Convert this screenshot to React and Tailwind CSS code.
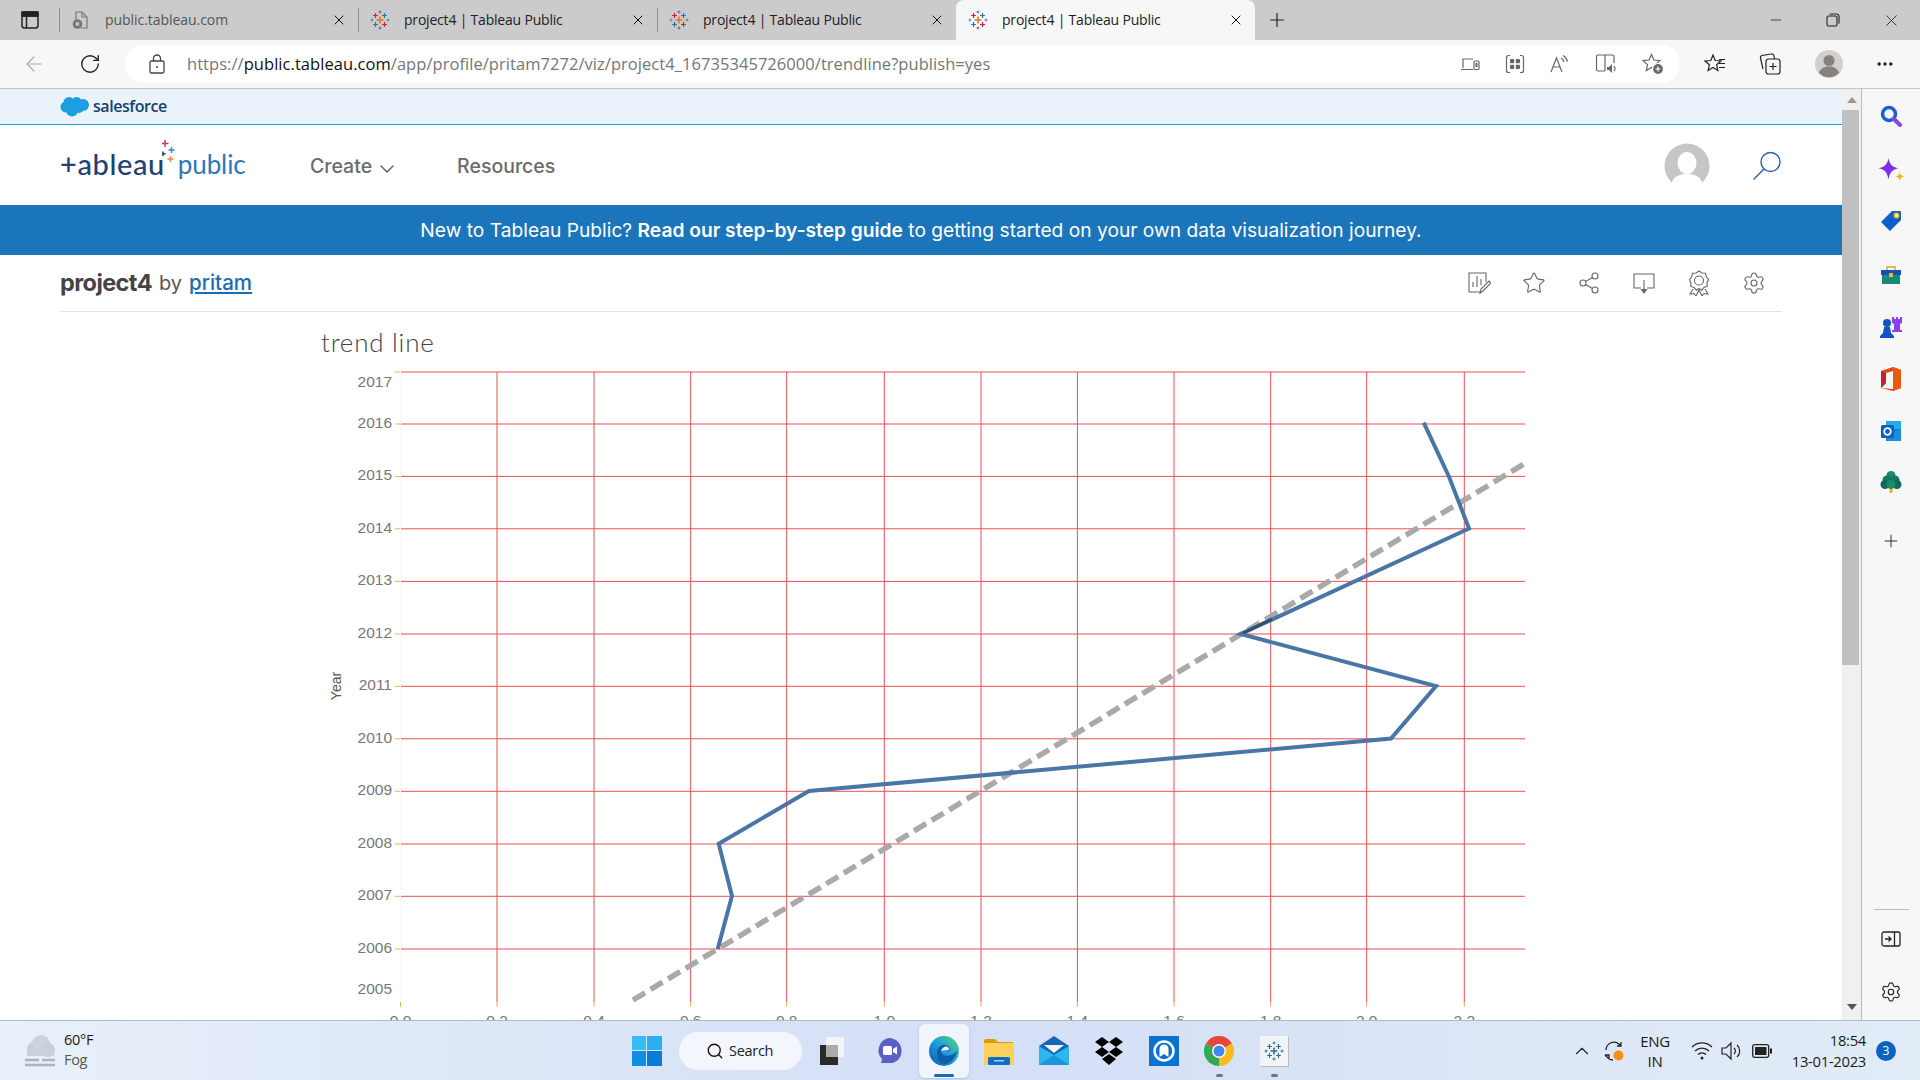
import { ArrowLeft, RotateCw, Plus, X, Minus, ChevronDown, ChevronUp, Star, Share2, Settings, Search, MoreHorizontal } from "lucide-react";

const ySteps = [
  ["2016", 424], ["2015", 476.4], ["2014", 528.8], ["2013", 581.4], ["2012", 634],
  ["2011", 686.3], ["2010", 738.8], ["2009", 791.3], ["2008", 844], ["2007", 896.3], ["2006", 949],
];
const xSteps = [
  ["0.0", 400.5], ["0.2", 497], ["0.4", 594], ["0.6", 690.7], ["0.8", 786.7], ["1.0", 884.3],
  ["1.2", 981], ["1.4", 1077.4], ["1.6", 1174], ["1.8", 1270.7], ["2.0", 1366.7], ["2.2", 1464.3],
];
const series = "1423.7,422.7 1449,476.7 1469,528.5 1240.7,634 1436,686 1391,738.6 809,790.9 718.7,843.8 732,896 717.7,949";

function TableauMark({ tile }) {
  const c = tile
    ? ["#2f6d9e", "#2f6d9e", "#2f6d9e", "#2f6d9e", "#2f6d9e"]
    : ["#e8762c", "#c72037", "#1f77b4", "#5b6591", "#59879b"];
  const cross = (x, y, s, col, w) => (
    <path d={`M${x - s} ${y}H${x + s}M${x} ${y - s}V${y + s}`} stroke={col} strokeWidth={w} />
  );
  return (
    <svg width="20" height="20" viewBox="0 0 20 20" fill="none">
      {cross(10, 10, 3.5, c[0], 1.6)}
      {cross(5.5, 5.5, 2.4, c[1], 1.2)}
      {cross(14.5, 5.5, 2.4, c[2], 1.2)}
      {cross(5.5, 14.5, 2.4, c[2], 1.2)}
      {cross(14.5, 14.5, 2.4, c[1], 1.2)}
      {cross(10, 2, 1.5, c[3], 1)}
      {cross(10, 18, 1.5, c[3], 1)}
      {cross(2, 10, 1.5, c[4], 1)}
      {cross(18, 10, 1.5, c[4], 1)}
    </svg>
  );
}

function Tab({ icon, label, active, sep, muted }) {
  return (
    <div className={`relative flex h-10 w-[299px] items-center ${active ? "rounded-t-lg bg-[#f7f7f7]" : ""}`}>
      {sep && <div className="absolute left-0 top-[8px] h-6 w-px bg-[#8d8d8d]" />}
      <div className="ml-[12px] flex w-[20px] justify-center">{icon}</div>
      <span className={`mb-[2px] ml-[14px] w-[226px] text-[14px] ${muted ? "tracking-[-0.05px] text-[#555]" : "tracking-[-0.2px] text-[#222]"}`}>{label}</span>
      <X size={16} strokeWidth={1.5} className="text-[#111]" />
    </div>
  );
}

function TabBar() {
  return (
    <div className="flex h-10 items-center bg-[#cbcbcb]">
      <div className="flex w-[59px] justify-center">
        <svg width="18" height="18" viewBox="0 0 18 18" fill="none" stroke="#222" strokeWidth="1.5">
          <rect x="1" y="1" width="16" height="16" rx="2.5" />
          <path d="M1 5h16M5.5 5v12" />
          <path d="M1 1h16v4H1z" fill="#222" />
        </svg>
      </div>
      <Tab
        sep
        muted
        label="public.tableau.com"
        icon={
          <svg width="18" height="20" viewBox="0 0 18 20" fill="none" stroke="#777" strokeWidth="1.2">
            <path d="M4 13V2h6l5 5v11H9" />
            <path d="M10 2v5h5" />
            <circle cx="5.5" cy="14" r="4.8" fill="#777" stroke="none" />
            <path d="M3.8 12.3l3.4 3.4M7.2 12.3l-3.4 3.4" stroke="#ddd" />
          </svg>
        }
      />
      <Tab sep label="project4 | Tableau Public" icon={<TableauMark />} />
      <Tab sep label="project4 | Tableau Public" icon={<TableauMark />} />
      <Tab active label="project4 | Tableau Public" icon={<TableauMark />} />
      <Plus size={22} strokeWidth={1.3} className="ml-[11px] text-[#222]" />
      <div className="ml-auto flex items-center text-[#222]">
        <Minus size={16} strokeWidth={1.2} className="mr-[42px]" />
        <svg width="14" height="14" viewBox="0 0 14 14" fill="none" stroke="#222" strokeWidth="1.1" className="mr-[42px]">
          <rect x="1" y="3" width="10" height="10" rx="1.5" />
          <path d="M3.5 1h7a2.5 2.5 0 0 1 2.5 2.5v7" />
        </svg>
        <X size={19} strokeWidth={1.1} className="mr-[19px]" />
      </div>
    </div>
  );
}

function AddressIcons() {
  const s = { fill: "none", stroke: "#666", strokeWidth: 1.2 };
  return (
    <div className="ml-auto flex items-center gap-[25px] pr-[16px]">
      <svg width="20" height="20" viewBox="0 0 20 20" {...s}>
        <path d="M3 14V5h10M1 15.5h12" />
        <rect x="14" y="7" width="5" height="8.5" rx="1" />
        <rect x="15.5" y="9" width="2" height="4" fill="#666" stroke="none" />
      </svg>
      <svg width="20" height="20" viewBox="0 0 20 20" {...s}>
        <path d="M5 1.5H3.5a2 2 0 0 0-2 2V16.500a2 2 0 0 0 2 2H5M15 1.500h1.500a2 2 0 0 1 2 2V16.500a2 2 0 0 1-2 2H15" />
        <rect x="5" y="5" width="4.2" height="4.2" rx="1" fill="#666" stroke="none" />
        <rect x="10.8" y="5" width="4.2" height="4.2" rx="1" fill="#666" stroke="none" />
        <rect x="5" y="10.8" width="4.2" height="4.2" rx="1" fill="#666" stroke="none" />
        <rect x="10.8" y="10.8" width="4.2" height="4.2" rx="1" fill="#666" stroke="none" />
      </svg>
      <svg width="20" height="20" viewBox="0 0 20 20" {...s}>
        <path d="M1 18L6.5 4 12 18M3 13h7" />
        <path d="M11 4a6 6 0 0 1 3 4M13 1.5a9 9 0 0 1 4.5 6" />
      </svg>
      <svg width="22" height="20" viewBox="0 0 22 20" {...s}>
        <path d="M10 17H3a1.500 1.500 0 0 1-1.500-1.500V2.500A1.500 1.500 0 0 1 3 1h7v16M10 1h7.500A1.500 1.500 0 0 1 19 2.500V9" />
        <path d="M12 13h2l3-3v9l-3-3h-2z" fill="#666" stroke="none" />
        <path d="M19 12a4 4 0 0 1 0 5" />
      </svg>
      <svg width="22" height="22" viewBox="0 0 22 22" {...s}>
        <path d="M9.500 1.500l2.400 5.500 6 .6-4.500 4 1.300 5.900-5.200-3-5.200 3 1.300-5.900-4.500-4 6-.6z" />
        <circle cx="16" cy="16" r="5.500" fill="#666" stroke="#fff" />
        <path d="M16 13.500v5M13.500 16h5" stroke="#fff" />
      </svg>
    </div>
  );
}

function ToolBar() {
  return (
    <div className="flex h-[49px] items-center border-b border-[#c4c4c4] bg-[#f7f7f7]">
      <ArrowLeft size={24} strokeWidth={1.1} className="ml-[22px] text-[#aaa]" />
      <RotateCw size={22} strokeWidth={1.5} className="ml-[33px] text-[#222]" />
      <div className="ml-[24px] flex h-[38px] w-[1555px] items-center rounded-full bg-white">
        <svg width="16" height="20" viewBox="0 0 16 20" fill="none" stroke="#444" strokeWidth="1.3" className="ml-[24px]">
          <rect x="1" y="7" width="14" height="12" rx="1.500" />
          <path d="M4.500 7V4.500a3.500 3.500 0 0 1 7 0V7" />
          <circle cx="8" cy="13" r="1" fill="#444" stroke="none" />
        </svg>
        <div className="ml-[22px] text-[16.500px] tracking-[0.05px] text-[#767676]">
          https://<span className="text-[#111]">public.tableau.com</span>/app/profile/pritam7272/viz/project4_16735345726000/trendline?publish=yes
        </div>
        <AddressIcons />
      </div>
      <svg width="22" height="22" viewBox="0 0 22 22" fill="none" stroke="#222" strokeWidth="1.2" className="ml-[24px]">
        <path d="M9 2l2.200 5.500 5.800.5-4.400 3.700 1.300 5.800L9 14.500l-4.900 3 1.300-5.800L1 8l5.800-.5z" />
        <path d="M15 6.500h6M15 10.500h6M15 14.500h6" />
      </svg>
      <svg width="24" height="24" viewBox="0 0 24 24" fill="none" stroke="#222" strokeWidth="1.2" className="ml-[32px]">
        <rect x="8" y="7" width="14" height="15" rx="2.500" />
        <path d="M5 17L2.500 6a2 2 0 0 1 1.500-2.500L13 2a2.500 2.500 0 0 1 3 2l.5 3M15 11v7M11.500 14.500h7" />
      </svg>
      <svg width="28" height="28" viewBox="0 0 28 28" className="ml-[33px]">
        <circle cx="14" cy="14" r="14" fill="#d1d0cd" />
        <circle cx="14" cy="10.500" r="5.500" fill="#85817d" />
        <path d="M4 23c1.500-5 5.500-6.500 10-6.500s8.500 1.500 10 6.500a14 14 0 0 1-20 0z" fill="#85817d" />
      </svg>
      <MoreHorizontal size={20} strokeWidth={2} className="ml-[32px] text-[#222]" />
    </div>
  );
}

function SalesforceBand() {
  return (
    <div className="flex h-[36px] items-center gap-[3px] border-b-[1.5px] border-[#1b9fe0] bg-[#eaf2fc] pl-[60px]">
      <svg width="30" height="21" viewBox="0 0 30 21" fill="#1b9fe0">
        <circle cx="9" cy="6.500" r="5.500" />
        <circle cx="16.500" cy="6" r="5" />
        <circle cx="23" cy="9" r="6" />
        <circle cx="6" cy="11" r="5.500" />
        <circle cx="12" cy="14.500" r="6" />
        <circle cx="19" cy="12" r="5" />
      </svg>
      <span className="mb-[2px] font-['Open_Sans',sans-serif] text-[16px] font-semibold tracking-[-0.45px] text-[#17406f]">salesforce</span>
    </div>
  );
}

function NavBar() {
  return (
    <div className="flex h-[80px] items-center bg-white pt-[3px] font-['Inter',sans-serif]">
      <div className="relative mb-[6px] ml-[60px] flex w-[250px] items-center font-['Lato',sans-serif] text-[29px] leading-none">
        <span className="font-medium tracking-[0.6px] text-[#24406e]">+ableau</span>
        <span className="ml-[13px] text-[26px] tracking-[-0.1px] text-[#2d77b8]">public</span>
        <svg width="18" height="28" viewBox="0 0 18 28" className="absolute left-[102px] top-[-9px]" fill="none" strokeWidth="1.500">
          <path d="M3 0v7M-.5 3.500h7" stroke="#cf3a5c" />
          <path d="M9.500 7v6M6.500 10h6" stroke="#2d8ccb" />
          <path d="M1 11.500v4.500M-1 13.800h4.500" stroke="#24406e" />
          <path d="M8.500 16v6M5.500 19h6" stroke="#e88a38" />
        </svg>
      </div>
      <span className="mt-[1px] text-[19.500px] font-medium text-[#6b6b6b]">Create</span>
      <ChevronDown size={24} strokeWidth={1.3} className="ml-[3px] mt-[4px] text-[#555]" />
      <span className="ml-[58px] mt-[1px] text-[19.500px] font-medium text-[#6b6b6b]">Resources</span>
      <div className="ml-auto flex items-center">
        <svg width="46" height="46" viewBox="0 0 46 46" className="mb-[2px]">
          <circle cx="23" cy="23" r="22.500" fill="#c6c6c6" />
          <ellipse cx="23" cy="20" rx="9.500" ry="11" fill="#fff" />
          <path d="M7 41c3-8 9-10 16-10s13 2 16 10a22.500 22.500 0 0 1-32 0z" fill="#fff" />
        </svg>
        <svg width="30" height="30" viewBox="0 0 30 30" fill="none" stroke="#2b5fa8" strokeWidth="1.400" className="mb-[2px] ml-[42px] mr-[60px]">
          <circle cx="18.500" cy="11" r="9.500" />
          <path d="M12 18L1.500 28.500" />
        </svg>
      </div>
    </div>
  );
}

function TitleIcons() {
  const s = { fill: "none", stroke: "#666", strokeWidth: 1.100 };
  return (
    <div className="ml-auto flex items-center gap-[31px] text-[#666]">
      <svg width="24" height="24" viewBox="0 0 24 24" {...s}>
        <path d="M15 21H2V2h17v9" />
        <path d="M6 16v-5M10 16V5M14 14V8" />
        <path d="M13 22l1-4 8-8 2 2-8 8z" />
      </svg>
      <Star size={24} strokeWidth={1.100} />
      <Share2 size={24} strokeWidth={1.100} />
      <svg width="24" height="24" viewBox="0 0 24 24" {...s}>
        <path d="M9 17H2V3h20v14h-7" />
        <path d="M12 9v12" />
        <path d="M8.500 18h7L12 23z" fill="#666" stroke="none" />
      </svg>
      <svg width="24" height="26" viewBox="0 0 24 26" {...s}>
        <path d="M12 1l3 2 3.500.3.800 3.500 2.200 2.700-1.500 3.200.3 3.500-3.300 1.300-2.300 2.700-2.700-1.700-2.700 1.700-2.300-2.700-3.300-1.300.3-3.500L2.500 9.500l2.200-2.700.8-3.500L9 3z" />
        <circle cx="12" cy="10.500" r="4.500" />
        <path d="M6 19l-3 5 4-.5 2 2.500 3-6 3 6 2-2.500 4 .5-3-5" />
      </svg>
      <Settings size={24} strokeWidth={1.100} />
    </div>
  );
}

function Chart() {
  return (
    <svg width="1841" height="660" viewBox="0 360 1841 660" className="block font-['Liberation_Sans',sans-serif]">
      <path d="M401 372V1002" stroke="#eee" strokeDasharray="2 2" />
      {[372, ...ySteps.map((s) => s[1])].map((y) => (
        <g key={y}>
          <path d={`M401 ${y}H1525`} stroke="#e94f55" />
          <path d={`M395 ${y}H400`} stroke="#dcb95a" />
        </g>
      ))}
      {xSteps.slice(1).map(([, x]) => (
        <path key={x} d={`M${x} 372V1002`} stroke="#e94f55" />
      ))}
      {xSteps.map(([t, x]) => (
        <g key={t}>
          <path d={`M${x} 1002V1007`} stroke="#dcb95a" />
          <text x={x} y="1026" textAnchor="middle" fontSize="15.500" fill="#777">{t}</text>
        </g>
      ))}
      <text x="392" y="387" textAnchor="end" fontSize="15.500" fill="#777">2017</text>
      {ySteps.map(([t, y]) => (
        <text key={t} x="392" y={y + 3.800} textAnchor="end" fontSize="15.500" fill="#777">{t}</text>
      ))}
      <text x="392" y="994" textAnchor="end" fontSize="15.500" fill="#777">2005</text>
      <text transform="translate(341 686) rotate(-90)" textAnchor="middle" fontSize="14" fill="#555">Year</text>
      <path d="M633 1000L1524 464" stroke="#a9a9a9" strokeWidth="5.500" strokeDasharray="14 6.500" fill="none" />
      <polyline points={series} fill="none" stroke="#4a76a6" strokeWidth="4" strokeLinejoin="miter" />
      <path d="M1243 633L1272 619" stroke="#35506f" strokeWidth="3" />
    </svg>
  );
}

function MainPage() {
  return (
    <div className="h-full w-[1842px] overflow-hidden bg-white">
      <SalesforceBand />
      <NavBar />
      <div className="flex h-[50px] items-center justify-center bg-[#1b75bb] font-['Inter',sans-serif] text-[19.200px] text-white">
        <span>
          New to Tableau Public? <b className="font-semibold">Read our step-by-step guide</b> to getting started on your own data visualization journey.
        </span>
      </div>
      <div className="mx-[60px] flex h-[57px] w-[1722px] items-center border-b border-[#e2e2e2] font-['Inter',sans-serif]">
        <span className="text-[23.500px] font-bold tracking-[-0.6px] text-[#444]">project4</span>
        <span className="ml-[7px] text-[20px] text-[#555]">by</span>
        <span className="ml-[7px] text-[20.500px] font-medium text-[#1b6cb0] underline">pritam</span>
        <div className="ml-auto mr-[16px] flex"><TitleIcons /></div>
      </div>
      <div className="h-[48px] pl-[321px] pt-[12px] font-['Lato',sans-serif] text-[26px] font-light leading-[36px] tracking-[0.75px] text-[#444]">
        trend line
      </div>
      <Chart />
    </div>
  );
}

function Scrollbar() {
  return (
    <div className="flex h-full w-[20px] flex-col border-r border-[#bbb] bg-[#f0f0f0]">
      <div className="flex h-[21px] justify-center pt-[8px]">
        <div className="h-0 w-0 border-x-[5px] border-b-[6px] border-x-transparent border-b-[#999]" />
      </div>
      <div className="h-[555px] w-[17px] bg-[#c0c0c0]" />
      <div className="mt-auto flex h-[22px] justify-center pt-[6px]">
        <div className="h-0 w-0 border-x-[5px] border-t-[6px] border-x-transparent border-t-[#555]" />
      </div>
    </div>
  );
}

function SidePanel() {
  return (
    <div className="flex h-full w-[58px] flex-col items-center bg-[#f7f7f7]">
      <div className="flex h-[54px] items-center">
        <svg width="22" height="22" viewBox="0 0 22 22" fill="none">
          <circle cx="9" cy="9" r="6.500" stroke="#1a5fd0" strokeWidth="3.500" />
          <path d="M14 14l6 6" stroke="#8a45dc" strokeWidth="4" strokeLinecap="round" />
        </svg>
      </div>
      <div className="flex h-[52px] items-center">
        <svg width="28" height="25" viewBox="0 0 22 20">
          <path d="M9 1c1 5 3 7 8 8-5 1-7 3-8 9-1-6-3-8-8-9 5-1 7-3 8-8z" fill="#7d2ff0" />
          <path d="M18 12c.3 2 1 3 3.500 3.500-2.500.5-3.200 1.500-3.500 4-.3-2.500-1-3.500-3.500-4 2.500-.5 3.200-1.500 3.500-3.500z" fill="#f8b413" />
        </svg>
      </div>
      <div className="flex h-[52px] items-center">
        <svg width="22" height="22" viewBox="0 0 22 22">
          <path d="M12 1h8a1 1 0 0 1 1 1v8L10 21 1 12z" fill="#0f5fc4" />
          <circle cx="16.500" cy="5.500" r="2.200" fill="#fff" stroke="#f5b914" strokeWidth="1.500" />
        </svg>
      </div>
      <div className="flex h-[56px] items-center">
        <svg width="22" height="20" viewBox="0 0 22 20">
          <path d="M7 5V2h8v3" fill="none" stroke="#e3a21a" strokeWidth="1.500" />
          <rect x="1" y="5" width="20" height="5" fill="#1450b8" />
          <rect x="2" y="10" width="18" height="9" fill="#12897b" />
          <rect x="9" y="8" width="4" height="4" fill="#f5b914" />
        </svg>
      </div>
      <div className="flex h-[48px] items-center">
        <svg width="24" height="22" viewBox="0 0 24 22">
          <path d="M14 1h2v2h2V1h2v2h2V1h2v6l-2 1v6h2v2H14v-2h2V8l-2-1z" fill="#8d3ef0" transform="translate(-1 0)" />
          <circle cx="8" cy="7" r="4" fill="#1450c8" />
          <path d="M5 11h6l1 6 3 3v2H1v-2l3-3z" fill="#1450c8" />
        </svg>
      </div>
      <div className="flex h-[56px] items-center">
        <svg width="20" height="24" viewBox="0 0 20 24">
          <path d="M12 0l8 3v18l-8 3-12-3 12 1V4L5 6v10l-5 5V4z" fill="#e04a10" />
          <path d="M0 4l5 2v10l-5 5z" fill="#c81e3c" />
          <path d="M12 0l8 3v18l-8 3z" fill="#ea5a0c" />
        </svg>
      </div>
      <div className="flex h-[48px] items-center">
        <svg width="22" height="22" viewBox="0 0 22 22">
          <rect x="6" y="1" width="15" height="8" fill="#28a8ea" />
          <rect x="6" y="9" width="15" height="12" fill="#0f78d4" />
          <path d="M9 14l12-6v13H6z" fill="#1490df" />
          <rect x="1" y="5" width="13" height="13" rx="1.500" fill="#0b62b8" />
          <circle cx="7.500" cy="11.500" r="3.300" fill="none" stroke="#fff" strokeWidth="1.800" />
        </svg>
      </div>
      <div className="flex h-[54px] items-center">
        <svg width="22" height="24" viewBox="0 0 22 24">
          <rect x="9.500" y="17" width="3" height="6" fill="#f1b11b" />
          <circle cx="11" cy="5.500" r="4.500" fill="#1c8a6e" />
          <circle cx="7" cy="10" r="4.500" fill="#17785f" />
          <circle cx="15" cy="10" r="4.500" fill="#17785f" />
          <circle cx="5" cy="14.500" r="4.500" fill="#0f6a58" />
          <circle cx="17" cy="14.500" r="4.500" fill="#0f6a58" />
          <circle cx="11" cy="14.500" r="4.500" fill="#1c8a6e" />
        </svg>
      </div>
      <div className="flex h-[64px] items-center">
        <Plus size={20} strokeWidth={1.200} className="text-[#333]" />
      </div>
      <div className="mb-[4px] mt-auto h-px w-[35px] bg-[#bbb]" />
      <div className="flex h-[50px] items-center">
        <svg width="20" height="16" viewBox="0 0 20 16" fill="none" stroke="#222" strokeWidth="1.300">
          <rect x="1" y="1" width="18" height="14" rx="2" />
          <path d="M13.500 1v14M4 8h6M7.500 5.500L10 8l-2.500 2.500" />
        </svg>
      </div>
      <div className="flex h-[56px] items-center">
        <Settings size={22} strokeWidth={1.300} className="text-[#222]" />
      </div>
    </div>
  );
}

function TaskIcon({ children, dot, active }) {
  return (
    <div className={`relative mx-[2.500px] flex h-[54px] w-[50px] items-center justify-center rounded-md ${active ? "bg-[#f0f4fc] shadow-sm" : ""}`}>
      {children}
      {active && <div className="absolute bottom-[1px] h-[3px] w-[20px] rounded-full bg-[#0f6cbd]" />}
      {dot && <div className="absolute bottom-[1px] h-[3px] w-[7px] rounded-full bg-[#70757e]" />}
    </div>
  );
}

function TaskBar() {
  return (
    <div className="flex h-[60px] items-center border-t border-[#b4b9c2] bg-gradient-to-r from-[#e8f1f9] via-[#d4def6] to-[#e2ecf7] font-['Open_Sans',sans-serif] text-[#1a1a1a]">
      <div className="flex w-[619px] items-center pl-[24px]">
        <svg width="32" height="34" viewBox="0 0 32 34">
          <circle cx="10" cy="15" r="7" fill="#c5cfda" />
          <circle cx="17" cy="10" r="9" fill="#cbd4de" />
          <circle cx="24" cy="16" r="7" fill="#c5cfda" />
          <rect x="3" y="14" width="27" height="8" fill="#c8d1dc" />
          <path d="M1 26h14M18 26h13M1 31h30" stroke="#aab4c4" strokeWidth="2.500" />
        </svg>
        <div className="mb-[2px] ml-[8px] flex flex-col text-[14.500px] leading-[20px]">
          <span className="tracking-[-0.3px]">60°F</span>
          <span className="tracking-[-0.3px] text-[#555]">Fog</span>
        </div>
      </div>
      <div className="flex w-[55px] justify-center">
        <div className="grid h-[30px] w-[30px] grid-cols-2 gap-[1px]">
          <div className="bg-[#35bcf5]" />
          <div className="bg-[#2aaff0]" />
          <div className="bg-[#0f8fe4]" />
          <div className="bg-[#0b7bd8]" />
        </div>
      </div>
      <div className="ml-[5px] flex h-[38px] w-[123px] items-center rounded-full bg-[#f3f6fd] pl-[27px]">
        <Search size={18} strokeWidth={1.800} className="text-[#111]" />
        <span className="ml-[5px] text-[14.500px] tracking-[-0.3px] text-[#222]">Search</span>
      </div>
      <div className="ml-[2.500px] flex w-[55px] justify-center">
        <div className="relative h-[28px] w-[30px]">
          <div className="absolute right-[3px] top-0 h-[20px] w-[18px] bg-[#f4f4f4]" />
          <div className="absolute bottom-0 left-[3px] h-[20px] w-[18px] bg-[#2a2a2a]" />
          <div className="absolute left-[9px] top-[8px] h-[12px] w-[12px] bg-[#aaa]" />
        </div>
      </div>
      <div className="w-[2px]" />
      <TaskIcon>
        <svg width="28" height="30" viewBox="0 0 28 30">
          <path d="M14 2a12.500 12.500 0 0 1 12.500 12.500v1A11.500 11.500 0 0 1 15 27H6l1-4A12.500 12.500 0 0 1 14 2z" fill="#5b5fc7" />
          <rect x="8" y="10" width="9" height="9" rx="1.500" fill="#fff" />
          <path d="M18 13l4-2.500v8L18 16z" fill="#fff" />
        </svg>
      </TaskIcon>
      <TaskIcon active>
        <svg width="32" height="32" viewBox="0 0 32 32">
          <defs>
            <linearGradient id="edgeA" x1="0" y1="1" x2="1" y2="0">
              <stop offset="0" stopColor="#0c59a4" />
              <stop offset="0.500" stopColor="#1b9de2" />
              <stop offset="1" stopColor="#5fd46a" />
            </linearGradient>
          </defs>
          <circle cx="16" cy="16" r="15" fill="url(#edgeA)" />
          <path d="M9 18c0-6 5-9 9-8 3.500 1 4.500 4 3 6h-8c0 4 5 6 10 4 2-.8 4-2 6-4-1 7-7 13-13 13-5 0-7-6-7-11z" fill="#0f5ea8" />
          <path d="M13 16c1-3 3-4.500 5-4.500 2 0 3 1.500 3 3.500l-8 1z" fill="#eef3fb" />
        </svg>
      </TaskIcon>
      <TaskIcon>
        <svg width="32" height="28" viewBox="0 0 32 28">
          <path d="M1 4a2 2 0 0 1 2-2h9l3 3h15v6H1z" fill="#d99c09" />
          <rect x="1" y="6" width="30" height="22" rx="1" fill="#fcd05a" />
          <rect x="5" y="20" width="22" height="8" rx="1.500" fill="#0d6fc4" />
          <rect x="11" y="23" width="10" height="1.500" fill="#9fd2f5" />
        </svg>
      </TaskIcon>
      <TaskIcon>
        <svg width="30" height="29" viewBox="0 0 30 29">
          <path d="M15 0L0 10v19h30V10z" fill="#1565b8" />
          <path d="M5 9h20L15 17z" fill="#f2f2f2" />
          <path d="M0 10l15 9 15-9v19H0z" fill="#2cb6f0" />
          <path d="M0 29l15-10 15 10z" fill="#1a94dc" />
        </svg>
      </TaskIcon>
      <TaskIcon>
        <svg width="30" height="28" viewBox="0 0 30 28" fill="#000">
          <path d="M8 0l7 5-7 5-7-5zM22 0l7 5-7 5-7-5zM8 10l7 5-7 5-7-5zM22 10l7 5-7 5-7-5zM15 17l7 5-7 6-7-6z" />
        </svg>
      </TaskIcon>
      <TaskIcon>
        <svg width="30" height="30" viewBox="0 0 30 30">
          <rect width="30" height="30" fill="#0b73cf" />
          <circle cx="15" cy="15" r="9.500" fill="none" stroke="#fff" strokeWidth="2.500" />
          <path d="M10.500 21v-8a4.500 4.500 0 0 1 9 0v8l-4.500-3z" fill="#fff" />
        </svg>
      </TaskIcon>
      <TaskIcon dot>
        <svg width="30" height="30" viewBox="0 0 30 30">
          <path d="M15 15L2 7.500A15 15 0 0 1 28 7.500z" fill="#e8453c" />
          <path d="M15 15L28 7.500A15 15 0 0 1 15 30z" fill="#f9bc15" />
          <path d="M15 15L15 30A15 15 0 0 1 2 7.500z" fill="#34a853" />
          <circle cx="15" cy="15" r="7" fill="#fff" />
          <circle cx="15" cy="15" r="5.500" fill="#4285f4" />
        </svg>
      </TaskIcon>
      <TaskIcon dot>
        <div className="flex h-[30px] w-[28px] items-center justify-center bg-[#f3f4f6] shadow-[1px_1px_0_#bbb]">
          <TableauMark tile />
        </div>
      </TaskIcon>
      <div className="ml-auto flex items-center pr-[24px]">
        <div className="flex w-[30px] justify-center">
          <ChevronUp size={22} strokeWidth={1.200} className="text-[#222]" />
        </div>
        <div className="flex w-[34px] justify-center">
          <svg width="24" height="24" viewBox="0 0 24 24" fill="none" stroke="#222" strokeWidth="1.300">
            <path d="M4 11a8 8 0 0 1 13-6l2 2M19 3v4h-4M3 16h4v4M3 16l2 2a8 8 0 0 0 6 3" />
            <circle cx="16.500" cy="16.500" r="5" fill="#f29111" stroke="none" />
          </svg>
        </div>
        <div className="flex w-[48px] flex-col items-center text-[15px] leading-[20px] tracking-[-0.3px]">
          <span>ENG</span>
          <span>IN</span>
        </div>
        <div className="ml-[8px] flex w-[30px] justify-center">
          <svg width="22" height="20" viewBox="0 0 22 20" fill="none" stroke="#222" strokeWidth="1.300">
            <path d="M1 6a14 14 0 0 1 20 0M4 10a10 10 0 0 1 14 0M7 13.500a6 6 0 0 1 8 0" />
            <circle cx="11" cy="17" r="1.500" fill="#222" stroke="none" />
          </svg>
        </div>
        <div className="flex w-[30px] justify-center">
          <svg width="22" height="20" viewBox="0 0 22 20" fill="none" stroke="#222" strokeWidth="1.200">
            <path d="M1 7h4l5-5v16l-5-5H1z" />
            <path d="M13 7a4 4 0 0 1 0 6M16 4a8 8 0 0 1 0 12" />
          </svg>
        </div>
        <div className="flex w-[30px] justify-center">
          <svg width="20" height="14" viewBox="0 0 20 14">
            <rect x=".700" y=".700" width="16" height="12.600" rx="2" fill="none" stroke="#222" strokeWidth="1.300" />
            <rect x="3" y="3" width="11.500" height="8" fill="#222" />
            <rect x="18" y="4.500" width="2" height="5" fill="#222" />
          </svg>
        </div>
        <div className="flex w-[89px] flex-col items-end text-[14.800px] leading-[21px] tracking-[-0.3px]">
          <span>18:54</span>
          <span>13-01-2023</span>
        </div>
        <div className="ml-[10px] flex h-[20px] w-[20px] items-center justify-center rounded-full bg-[#0b63c2] text-[12px] text-white">3</div>
      </div>
    </div>
  );
}

export default function App() {
  return (
    <div className="flex h-[1080px] w-[1920px] flex-col overflow-hidden bg-white font-['Open_Sans',sans-serif]">
      <TabBar />
      <ToolBar />
      <div className="flex h-[931px]">
        <MainPage />
        <Scrollbar />
        <SidePanel />
      </div>
      <TaskBar />
    </div>
  );
}
